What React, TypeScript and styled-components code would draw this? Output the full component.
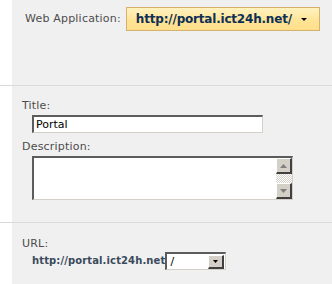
import React, { FC } from "react";
import styled, { createGlobalStyle } from "styled-components";

const GlobalStyle = createGlobalStyle`
  html, body {
    margin: 0;
    padding: 0;
    background: #ffffff;
  }
  body {
    font-family: "DejaVu Sans", Verdana, sans-serif;
    font-size: 11px;
  }
`;

const Page = styled.div`
  width: 332px;
  height: 284px;
  overflow: hidden;
  display: flex;
  flex-direction: column;
`;

const Section = styled.div<{ $height: number; $last?: boolean }>`
  display: grid;
  grid-template-columns: 12px 1fr;
  height: ${(p) => p.$height}px;
  border-bottom: ${(p) => (p.$last ? "none" : "1px solid #dadada")};
  flex: ${(p) => (p.$last ? "1" : "0 0 auto")};
`;

const Gutter = styled.div`
  background: #ffffff;
`;

const Panel = styled.div<{ $pad: string }>`
  background: #f0f0f0;
  padding: ${(p) => p.$pad};
  display: flex;
  flex-direction: column;
  align-items: flex-start;
`;

const AppRow = styled.div`
  display: flex;
  align-items: center;
  gap: 5px;
`;

const Label = styled.div`
  color: #4c4c4c;
  line-height: 14px;
  white-space: nowrap;
  letter-spacing: 0.2px;
`;

const AppPicker = styled.div`
  box-sizing: border-box;
  width: 194px;
  height: 24px;
  display: flex;
  align-items: center;
  padding: 0 12px 0 9px;
  border: 1px solid #d4b26e;
  background: linear-gradient(#fff2c0, #ffe394 60%, #ffdf8a);
  color: #0d2f55;
  font-weight: bold;
  font-size: 12px;
  letter-spacing: -0.2px;
  white-space: nowrap;

  svg {
    margin-left: auto;
    flex: 0 0 auto;
  }
`;

const Indent = styled.div<{ $top: number; $left?: number }>`
  margin: ${(p) => p.$top}px 0 0 ${(p) => p.$left ?? 10}px;
`;

const Field = styled.div<{ $width: number; $height: number }>`
  box-sizing: border-box;
  width: ${(p) => p.$width}px;
  height: ${(p) => p.$height}px;
  border-style: solid;
  border-width: 2px 1px 1px 2px;
  border-color: #5c5c5c #d4d0c8 #d4d0c8 #5c5c5c;
  background: #ffffff;
  display: flex;
  align-items: stretch;
`;

const TextInput = styled.input`
  border: none;
  outline: none;
  background: transparent;
  flex: 1;
  min-width: 0;
  padding: 0 0 0 2px;
  font-family: "DejaVu Sans", Verdana, sans-serif;
  font-size: 11px;
  color: #000000;
`;

const TextArea = styled.textarea`
  border: none;
  outline: none;
  resize: none;
  flex: 1;
  background: transparent;
  font-family: "DejaVu Sans", Verdana, sans-serif;
  font-size: 11px;
`;

const ScrollBar = styled.div`
  width: 16px;
  display: flex;
  flex-direction: column;
  background-color: #ffffff;
  background-image: repeating-conic-gradient(#d4d0c8 0 25%, #ffffff 0 50%);
  background-size: 2px 2px;
`;

const ArrowButton = styled.div<{ $bottom?: boolean }>`
  box-sizing: border-box;
  width: 16px;
  height: 16px;
  flex: 0 0 auto;
  background: #d4d0c8;
  border-style: solid;
  border-width: 1px 2px 2px 1px;
  border-color: #ffffff #404040 #404040 #ffffff;
  display: flex;
  align-items: center;
  justify-content: center;
  margin-top: ${(p) => (p.$bottom ? "auto" : "0")};
`;

const UrlRow = styled.div`
  display: flex;
  align-items: center;
  margin: 1px 0 0 10px;
`;

const UrlText = styled.span`
  color: #3a4a5c;
  font-weight: bold;
  font-size: 10px;
  letter-spacing: 0.12px;
  line-height: 14px;
`;

const SelectValue = styled.span`
  flex: 1;
  align-self: center;
  color: #000000;
  padding-left: 3px;
  line-height: 14px;
`;

const SelectButton = styled.div`
  box-sizing: border-box;
  width: 16px;
  height: 14px;
  align-self: center;
  margin: 0 1px 0 0;
  background: #d4d0c8;
  border-style: solid;
  border-width: 1px 2px 2px 1px;
  border-color: #ffffff #404040 #404040 #ffffff;
  display: flex;
  align-items: center;
  justify-content: center;
`;

const Caret: FC<{ up?: boolean; color?: string; w?: number; h?: number }> = ({
  up,
  color = "#000",
  w = 7,
  h = 4,
}) => (
  <svg width={w} height={h} viewBox={`0 0 ${w} ${h}`}>
    {up ? (
      <path d={`M${w / 2} 0 L${w} ${h} L0 ${h} Z`} fill={color} />
    ) : (
      <path d={`M0 0 L${w} 0 L${w / 2} ${h} Z`} fill={color} />
    )}
  </svg>
);

const App: FC = () => (
  <Page>
    <GlobalStyle />
    <Section $height={85}>
      <Gutter />
      <Panel $pad="7px 0 0 13px">
        <AppRow>
          <Label>Web Application:</Label>
          <AppPicker>
            <span>http://portal.ict24h.net/</span>
            <Caret w={6} h={3} />
          </AppPicker>
        </AppRow>
      </Panel>
    </Section>
    <Section $height={136}>
      <Gutter />
      <Panel $pad="13px 0 0 10px">
        <Label>Title:</Label>
        <Indent $top={2}>
          <Field $width={231} $height={18}>
            <TextInput defaultValue="Portal" />
          </Field>
        </Indent>
        <Indent $top={7} $left={0}>
          <Label>Description:</Label>
        </Indent>
        <Indent $top={2}>
          <Field $width={261} $height={44}>
            <TextArea />
            <ScrollBar>
              <ArrowButton>
                <Caret up color="#808080" />
              </ArrowButton>
              <ArrowButton $bottom>
                <Caret color="#808080" />
              </ArrowButton>
            </ScrollBar>
          </Field>
        </Indent>
      </Panel>
    </Section>
    <Section $height={61} $last>
      <Gutter />
      <Panel $pad="14px 0 0 10px">
        <Label>URL:</Label>
        <UrlRow>
          <UrlText>http://portal.ict24h.net</UrlText>
          <Field $width={61} $height={18}>
            <SelectValue>/</SelectValue>
            <SelectButton>
              <Caret w={5} h={3} />
            </SelectButton>
          </Field>
        </UrlRow>
      </Panel>
    </Section>
  </Page>
);

export default App;
